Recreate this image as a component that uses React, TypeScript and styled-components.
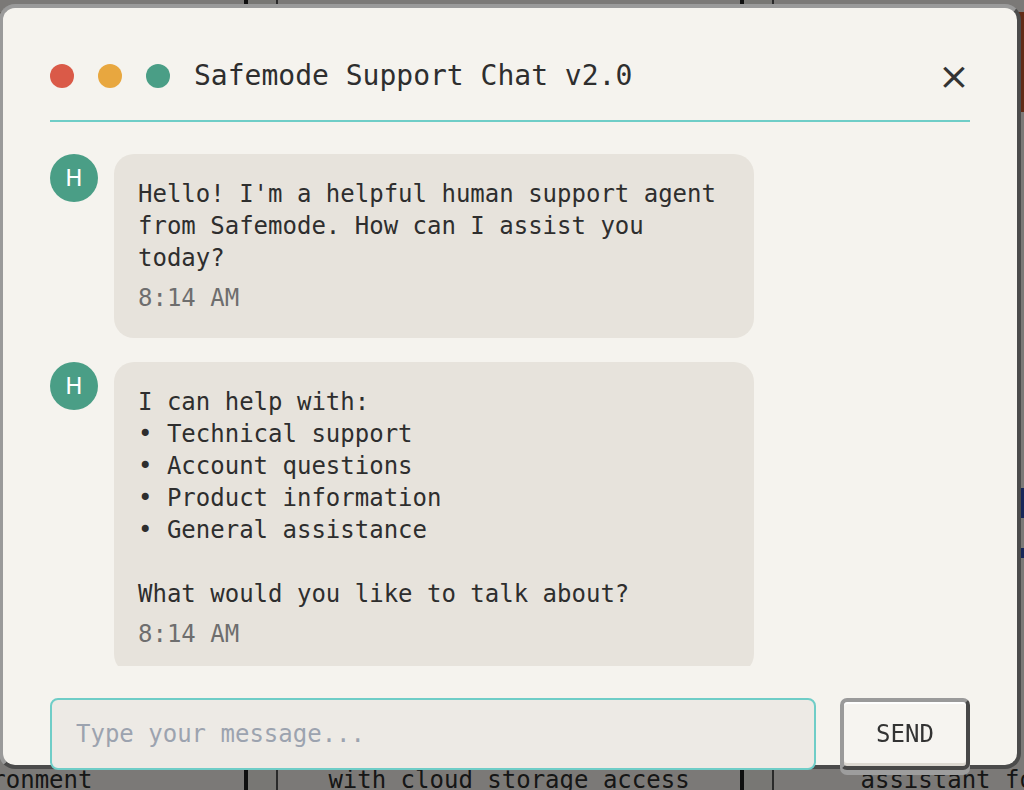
import React from "react";
import styled, { createGlobalStyle } from "styled-components";

const GlobalStyle = createGlobalStyle`
  html, body {
    margin: 0;
    padding: 0;
    width: 1024px;
    height: 790px;
    overflow: hidden;
    background: #f1eee8;
    font-family: "DejaVu Sans Mono", "Liberation Mono", monospace;
    color: #333;
  }
  * { box-sizing: border-box; }
`;

/* ---------- background page ---------- */
const BgGrid = styled.div`
  display: grid;
  grid-template-columns: repeat(3, 468px);
  column-gap: 28px;
  margin: -20px 0 0 -220px;
`;

const BgCard = styled.div<{ $banner: string }>`
  height: 830px;
  display: flex;
  flex-direction: column;
  background: #f6f3ee;
  border: 2px solid #555;
  border-right: 4px solid #1e1e1e;
  &::before {
    content: "";
    display: block;
    height: 100px;
    margin: 30px 0 0;
    background: ${(p) => p.$banner};
  }
`;

const BgBody = styled.div`
  flex: 1;
  display: flex;
  flex-direction: column;
  justify-content: flex-end;
  align-items: center;
  padding-bottom: 12px;
  font-size: 24px;
  line-height: 32px;
  color: #2c2c2c;
`;

const BgTag = styled.div<{ $c: string; $h: number; $gap: number }>`
  width: 100%;
  height: ${(p) => p.$h}px;
  margin-bottom: ${(p) => p.$gap}px;
  background: ${(p) => p.$c};
`;

/* ---------- overlay + modal ---------- */
const Overlay = styled.div`
  position: fixed;
  inset: 0;
  background: rgba(0, 0, 0, 0.5);
  display: flex;
  align-items: flex-start;
`;

const Modal = styled.div`
  width: 1022px;
  height: 765px;
  margin: 4px 0 0 -1px;
  padding: 48px 47px 0 47px;
  background: #f5f3ee;
  border: 4px solid;
  border-color: #9a9a9a #4b4b4b #4b4b4b #9a9a9a;
  border-radius: 16px;
  display: flex;
  flex-direction: column;
`;

const Header = styled.div`
  display: flex;
  align-items: center;
  gap: 24px;
  height: 66px;
  padding-bottom: 24px;
  border-bottom: 2px solid #6fcdc7;
  flex-shrink: 0;
`;

const Dot = styled.span<{ $c: string }>`
  width: 24px;
  height: 24px;
  border-radius: 50%;
  background: ${(p) => p.$c};
  flex-shrink: 0;
`;

const Title = styled.h1`
  margin: 0;
  font-size: 28px;
  font-weight: normal;
  line-height: 40px;
  color: #2e2e2e;
`;

const CloseButton = styled.button`
  margin-left: auto;
  width: 32px;
  height: 40px;
  padding: 0;
  border: none;
  background: transparent;
  font-family: "DejaVu Sans", sans-serif;
  font-size: 38px;
  line-height: 40px;
  color: #333;
  cursor: pointer;
`;

const Messages = styled.div`
  margin-top: 32px;
  height: 512px;
  flex-shrink: 0;
  overflow: hidden;
  display: flex;
  flex-direction: column;
  gap: 24px;
`;

const Row = styled.div`
  display: flex;
  align-items: flex-start;
  gap: 16px;
`;

const Avatar = styled.div`
  width: 48px;
  height: 48px;
  border-radius: 50%;
  background: #4a9e86;
  color: #fff;
  font-family: "DejaVu Sans", sans-serif;
  font-size: 23px;
  display: flex;
  align-items: center;
  justify-content: center;
  flex-shrink: 0;
`;

const Bubble = styled.div`
  flex: 0 0 640px;
  padding: 24px;
  background: #e7e3dc;
  border-radius: 20px;
  font-size: 24px;
  line-height: 32px;
  color: #2e2e2e;
`;

const BubbleText = styled.div`
  white-space: pre-wrap;
`;

const Time = styled.div`
  margin-top: 8px;
  color: #6e6e6e;
`;

const InputRow = styled.div`
  margin-top: 32px;
  display: flex;
  gap: 24px;
  flex-shrink: 0;
`;

const Input = styled.input`
  flex: 1;
  height: 72px;
  padding: 0 24px;
  border: 2px solid #6fcdc7;
  border-radius: 8px;
  background: #edeae5;
  font-family: "DejaVu Sans Mono", monospace;
  font-size: 24px;
  color: #333;
  outline: none;
  &::placeholder {
    color: #9ca3af;
  }
`;

const SendButton = styled.button`
  width: 130px;
  height: 72px;
  border: 4px solid;
  border-color: #9a9a9a #474747 #474747 #9a9a9a;
  border-radius: 7px;
  background: #f6f4f0;
  box-shadow: inset 0 2px 0 #ffffff, inset 0 -3px 0 #dcd8d1, 0 5px 0 #9d9d9d;
  font-family: "DejaVu Sans Mono", monospace;
  font-size: 24px;
  color: #333;
  cursor: pointer;
`;

const messages = [
  {
    text: "Hello! I'm a helpful human support agent from Safemode. How can I assist you today?",
    time: "8:14 AM",
  },
  {
    text:
      "I can help with:\n• Technical support\n• Account questions\n• Product information\n• General assistance\n\nWhat would you like to talk about?",
    time: "8:14 AM",
  },
];

const cards = [
  { banner: "#c9c2b6", tag: "#ddd8cf", label: "environment" },
  { banner: "#c9c2b6", tag: "#ddd8cf", label: "with cloud storage access" },
  { banner: "#c2562c", tag: "#2f4fb3", label: "assistant for coding" },
];

export default function App() {
  return (
    <>
      <GlobalStyle />
      <BgGrid>
        {cards.map((c) => (
          <BgCard key={c.label} $banner={c.banner}>
            <BgBody>
              <BgTag $c={c.tag} $h={30} $gap={30} />
              <BgTag $c={c.tag} $h={10} $gap={206} />
              <div>{c.label}</div>
            </BgBody>
          </BgCard>
        ))}
      </BgGrid>
      <Overlay>
        <Modal role="dialog" aria-label="Safemode Support Chat">
          <Header>
            <Dot $c="#da5a48" />
            <Dot $c="#e8a73f" />
            <Dot $c="#4a9e86" />
            <Title>Safemode Support Chat v2.0</Title>
            <CloseButton aria-label="Close">×</CloseButton>
          </Header>
          <Messages>
            {messages.map((m, i) => (
              <Row key={i}>
                <Avatar>H</Avatar>
                <Bubble>
                  <BubbleText>{m.text}</BubbleText>
                  <Time>{m.time}</Time>
                </Bubble>
              </Row>
            ))}
          </Messages>
          <InputRow>
            <Input placeholder="Type your message..." />
            <SendButton>SEND</SendButton>
          </InputRow>
        </Modal>
      </Overlay>
    </>
  );
}
